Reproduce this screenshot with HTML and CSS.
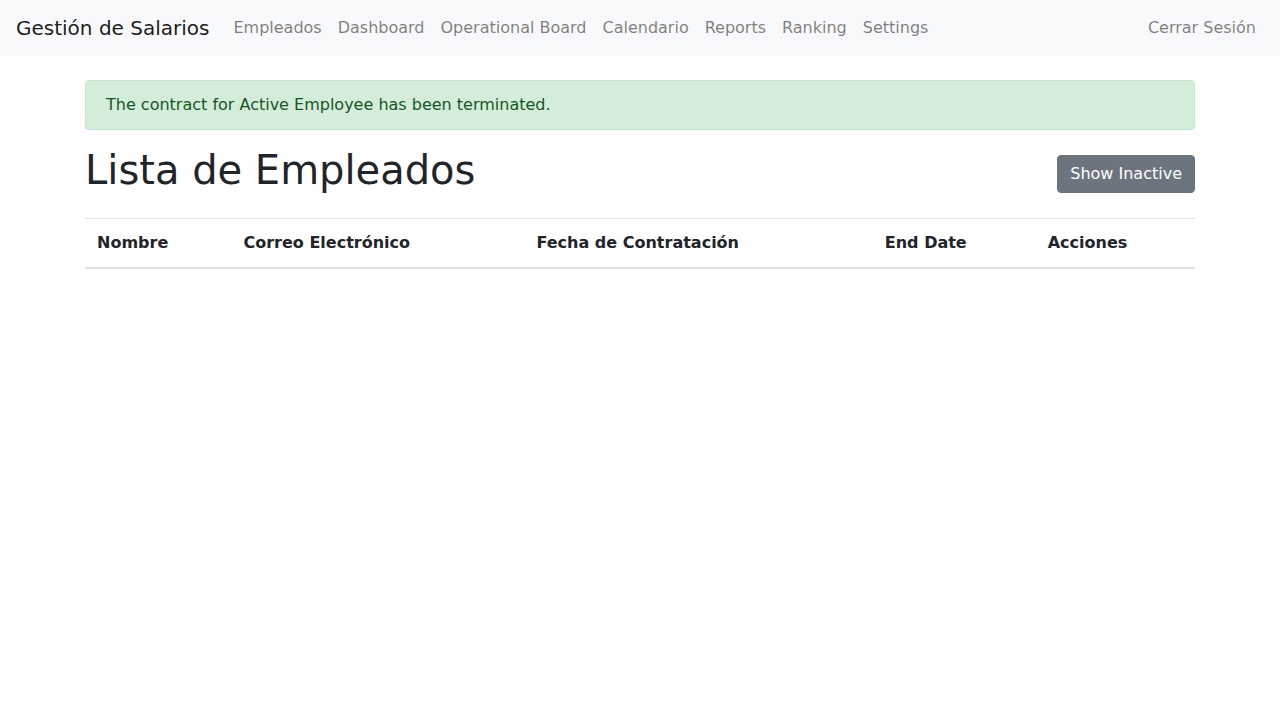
FILE: index.html
```html
<!DOCTYPE html>
<html lang="es">
<head>
<meta charset="utf-8">
<title>Lista de Empleados</title>
<link rel="stylesheet" href="styles.css">
</head>
<body>
<nav class="navbar">
  <a class="brand" href="#">Gestión de Salarios</a>
  <ul class="nav">
    <li><a class="nav-link" href="#">Empleados</a></li>
    <li><a class="nav-link" href="#">Dashboard</a></li>
    <li><a class="nav-link" href="#">Operational Board</a></li>
    <li><a class="nav-link" href="#">Calendario</a></li>
    <li><a class="nav-link" href="#">Reports</a></li>
    <li><a class="nav-link" href="#">Ranking</a></li>
    <li><a class="nav-link" href="#">Settings</a></li>
  </ul>
  <ul class="nav nav-right">
    <li><a class="nav-link" href="#">Cerrar Sesión</a></li>
  </ul>
</nav>
<main class="container">
  <div class="alert">The contract for Active Employee has been terminated.</div>
  <div class="header-row">
    <h1>Lista de Empleados</h1>
    <a class="btn" href="#">Show Inactive</a>
  </div>
  <table class="table">
    <thead>
      <tr>
        <th>Nombre</th>
        <th>Correo Electrónico</th>
        <th>Fecha de Contratación</th>
        <th>End Date</th>
        <th>Acciones</th>
      </tr>
    </thead>
    <tbody></tbody>
  </table>
</main>
</body>
</html>
```

FILE: styles.css
```css
* { box-sizing: border-box; }
html, body { margin: 0; }
body {
  font-family: "DejaVu Sans", sans-serif;
  font-size: 16px;
  line-height: 1.5;
  color: #212529;
  background: #fff;
}
a { text-decoration: none; }

.navbar {
  display: flex;
  align-items: center;
  background: #f8f9fa;
  padding: 8px 16px;
  height: 56px;
}
.brand {
  font-size: 20px;
  line-height: 30px;
  padding: 5px 0;
  margin-right: 16px;
  color: rgba(0, 0, 0, 0.9);
}
.nav {
  display: flex;
  list-style: none;
  margin: 0;
  padding: 0;
}
.nav-right { margin-left: auto; }
.nav-link {
  display: block;
  padding: 8px;
  color: rgba(0, 0, 0, 0.5);
}

.container {
  width: 1140px;
  margin: 24px auto 0;
  padding: 0 15px;
}
.alert {
  padding: 12px 20px;
  margin-bottom: 16px;
  border: 1px solid #c3e6cb;
  border-radius: 4px;
  background: #d4edda;
  color: #155724;
}
.header-row {
  display: flex;
  justify-content: space-between;
  align-items: center;
  margin-bottom: 16px;
}
h1 {
  margin: 0 0 8px;
  font-size: 40px;
  font-weight: 500;
  line-height: 1.2;
}
.btn {
  display: inline-block;
  padding: 6px 12px;
  font-size: 16px;
  line-height: 24px;
  color: #fff;
  background: #6c757d;
  border: 1px solid #6c757d;
  border-radius: 4px;
}
.table {
  width: 100%;
  border-collapse: collapse;
  margin-bottom: 16px;
}
.table th {
  padding: 12px;
  text-align: left;
  vertical-align: bottom;
  border-top: 1px solid #dee2e6;
  border-bottom: 2px solid #dee2e6;
  font-weight: bold;
}
```
